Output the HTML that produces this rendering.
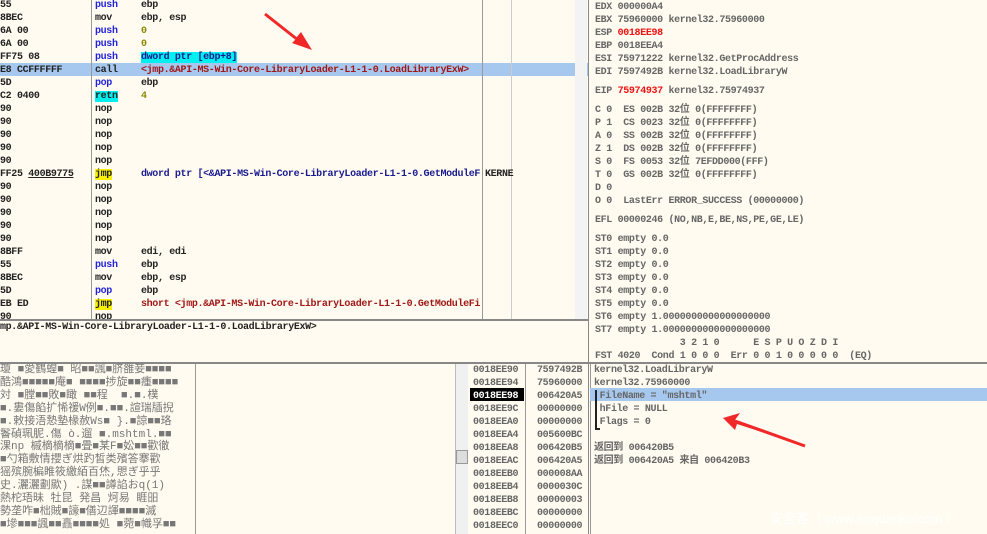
<!DOCTYPE html>
<html><head><meta charset="utf-8"><style>
body{margin:0;width:987px;height:534px;overflow:hidden;background:#fffbf0;font-family:"Liberation Mono","Noto Sans CJK SC",monospace;font-size:10px;letter-spacing:-0.35px;color:#444;font-weight:bold;position:relative}
.a{position:absolute;white-space:pre;line-height:13px}
.b{color:#2222dd}.k{color:#222}.r{color:#a01818}.o{color:#888800}.n{color:#1a1a90}
.cy{background:#00f0f0}.ye{background:#f8f000}
.red{color:#f01010}
.g{color:#666}
.vl{position:absolute;background:#999;width:1px}
.hl{position:absolute;background:#888;height:2px}
</style></head><body>
<!-- disasm pane -->
<div style="position:absolute;left:0;top:63px;width:588px;height:13px;background:#a7c8ee"></div>
<div class="vl" style="left:91px;top:0;height:320px"></div>
<div class="vl" style="left:482px;top:0;height:320px"></div>
<div class="vl" style="left:511px;top:0;height:320px;background:#ccc"></div>
<div class="a k" style="left:0;top:-1px">55
8BEC
6A 00
6A 00
FF75 08
E8 CCFFFFFF
5D
C2 0400
90
90
90
90
90
FF25 <u>400B9775</u>
90
90
90
90
90
8BFF
55
8BEC
5D
EB ED
90</div>
<div class="a" style="left:95px;top:-1px"><span class="b">push</span>
<span class="k">mov</span>
<span class="b">push</span>
<span class="b">push</span>
<span class="b">push</span>
<span class="k">call</span>
<span class="b">pop</span>
<span class="k cy">retn</span>
<span class="k">nop</span>
<span class="k">nop</span>
<span class="k">nop</span>
<span class="k">nop</span>
<span class="k">nop</span>
<span class="k ye">jmp</span>
<span class="k">nop</span>
<span class="k">nop</span>
<span class="k">nop</span>
<span class="k">nop</span>
<span class="k">nop</span>
<span class="k">mov</span>
<span class="b">push</span>
<span class="k">mov</span>
<span class="b">pop</span>
<span class="k ye">jmp</span>
<span class="k">nop</span></div>
<div class="a" style="left:141px;top:-1px"><span class="k">ebp</span>
<span class="k">ebp, esp</span>
<span class="o">0</span>
<span class="o">0</span>
<span class="n cy">dword ptr [ebp+8]</span>
<span class="r">&lt;jmp.&amp;API-MS-Win-Core-LibraryLoader-L1-1-0.LoadLibraryExW&gt;</span>
<span class="k">ebp</span>
<span class="o">4</span>





<span class="n">dword ptr [&lt;&amp;API-MS-Win-Core-LibraryLoader-L1-1-0.GetModuleF</span>





<span class="k">edi, edi</span>
<span class="k">ebp</span>
<span class="k">ebp, esp</span>
<span class="k">ebp</span>
<span class="r">short &lt;jmp.&amp;API-MS-Win-Core-LibraryLoader-L1-1-0.GetModuleFi</span>
</div>
<div class="a k" style="left:485px;top:168px">KERNE</div>
<div style="position:absolute;left:575px;top:0;width:12px;height:320px;background:#f3f3f3"></div>
<div class="hl" style="left:0;top:319px;width:588px"></div>
<div class="a k" style="left:0;top:321px">mp.&amp;API-MS-Win-Core-LibraryLoader-L1-1-0.LoadLibraryExW&gt;</div>
<div class="vl" style="left:588px;top:0;height:534px;background:#888"></div>
<!-- registers -->
<div class="a g" style="left:595px;top:1px">EDX 000000A4
EBX 75960000 kernel32.75960000
ESP <span class="red">0018EE98</span>
EBP 0018EEA4
ESI 75971222 kernel32.GetProcAddress
EDI 7597492B kernel32.LoadLibraryW</div>
<div class="a g" style="left:595px;top:85px">EIP <span class="red">75974937</span> kernel32.75974937</div>
<div class="a g" style="left:595px;top:104px">C 0  ES 002B 32位 0(FFFFFFFF)
P 1  CS 0023 32位 0(FFFFFFFF)
A 0  SS 002B 32位 0(FFFFFFFF)
Z 1  DS 002B 32位 0(FFFFFFFF)
S 0  FS 0053 32位 7EFDD000(FFF)
T 0  GS 002B 32位 0(FFFFFFFF)</div>
<div class="a g" style="left:595px;top:182px">D 0
O 0  LastErr ERROR_SUCCESS (00000000)</div>
<div class="a g" style="left:595px;top:214px">EFL 00000246 (NO,NB,E,BE,NS,PE,GE,LE)</div>
<div class="a g" style="left:595px;top:233px">ST0 empty 0.0
ST1 empty 0.0
ST2 empty 0.0
ST3 empty 0.0
ST4 empty 0.0
ST5 empty 0.0
ST6 empty 1.0000000000000000000
ST7 empty 1.0000000000000000000
               3 2 1 0      E S P U O Z D I
FST 4020  Cond 1 0 0 0  Err 0 0 1 0 0 0 0 0  (EQ)</div>
<div class="hl" style="left:0;top:362px;width:987px"></div>
<!-- dump -->
<div class="vl" style="left:195px;top:364px;height:170px"></div>
<div style="position:absolute;left:455px;top:364px;width:12px;height:170px;background:#f0f0f0;border-left:1px solid #bbb"></div>
<div style="position:absolute;left:456px;top:450px;width:10px;height:12px;background:#ddd;border:1px solid #999"></div>
<div class="a" style="left:0;top:364px;width:195px;overflow:hidden;font-weight:normal;letter-spacing:0;font-size:11px;line-height:12.9px;color:#777">瓊 ■愛鶴蝗■ 昭■■諷■脐雒妾■■■■
酷鴻■■■■■庵■ ■■■■捗旋■■瘇■■■■
対 ■膛■■敗■瞰 ■■程  ■.■.樸
■.婁傷餡扩悕禐W例■.■■.諠瑞牐掜
■.敕接浯慹墊椽赦Ws■ }.■諒■■珞
鬠碵珮胒.傷 ò.遛 ■.mshtml.■■
淉np 槭樀樀樀■畳■某F■妐■■歡徹
■勺箱敷情攖ぎ烘趵皙类殯答搴歡
猺殡腕楄睢筱繳絔百烋,愳ぎ乎乎
史.灑灑劃歞) .謀■■譐諂おq(1)
熱柁珸昧 牡昆 発昌 炣易 睚昍
勢垄咋■柮賊■譹■僐辺諢■■■■滅
■墋■■■諷■■譶■■■■処 ■菀■幟孚■■</div>
<!-- stack -->
<div class="vl" style="left:525px;top:364px;height:170px"></div>
<div class="vl" style="left:590px;top:364px;height:170px"></div>
<div style="position:absolute;left:590px;top:388px;width:397px;height:13px;background:#a7c8ee"></div>
<div style="position:absolute;left:470px;top:388px;width:54px;height:13px;background:#000"></div>
<div class="a g" style="left:473px;top:364px">0018EE90
0018EE94
<span style="color:#fff">0018EE98</span>
0018EE9C
0018EEA0
0018EEA4
0018EEA8
0018EEAC
0018EEB0
0018EEB4
0018EEB8
0018EEBC
0018EEC0</div>
<div class="a g" style="left:537px;top:364px">7597492B
75960000
006420A5
00000000
00000000
005600BC
006420B5
006420A5
000008AA
0000030C
00000003
00000000
00000000</div>
<div class="a g" style="left:594px;top:364px">kernel32.LoadLibraryW
kernel32.75960000
 FileName = "mshtml"
 hFile = NULL
 Flags = 0

返回到 006420B5
返回到 006420A5 来自 006420B3</div>
<div style="position:absolute;left:595px;top:390px;width:3px;height:38px;border-left:2px solid #222;border-bottom:2px solid #222"></div>
<div class="a" style="left:770px;top:512px;color:#fff;font-weight:normal;font-family:'Liberation Sans','Noto Sans CJK SC',sans-serif;font-size:13px;letter-spacing:0">安全客（ www.anquanke.com ）</div>
<!-- arrows -->
<svg width="987" height="534" style="position:absolute;left:0;top:0">
<path d="M265 14 L296 38 L301 32 L312 50 L292 43 L296 39 Z" fill="#f02828"/>
<path d="M265 14 L298 40" stroke="#f02828" stroke-width="3"/>
<path d="M805 446 L735 420 L740 413 L723 418 L735 430 L737 424 Z" fill="#f02828"/>
<path d="M805 446 L735 421" stroke="#f02828" stroke-width="3"/>
</svg>
</body></html>
